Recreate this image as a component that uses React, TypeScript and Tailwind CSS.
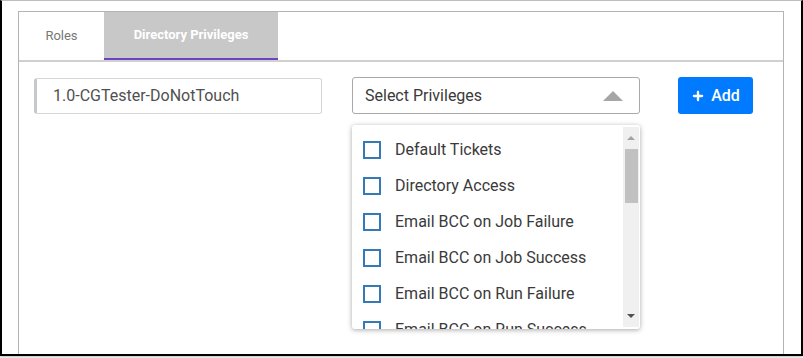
import { Plus } from 'lucide-react'

const privileges = [
  'Default Tickets',
  'Directory Access',
  'Email BCC on Job Failure',
  'Email BCC on Job Success',
  'Email BCC on Run Failure',
  'Email BCC on Run Success',
]

export default function App() {
  return (
    <div className="w-[803px] h-[358px] bg-white font-['Roboto',sans-serif]">
      <div className="w-[803px] h-[356px] border-t border-t-[#bdbdbd] border-x-2 border-b-2 border-black pl-4 pr-[17px] pt-[10px] overflow-hidden shadow-[0_1px_2px_#bbb]">
        <div className="h-[400px] border border-[#b4b4b4] border-b-0">
          {/* Tabs */}
          <div className="flex h-[50px] border-b-2 border-[#d0d0d0]">
            <div className="w-[85px] flex items-center justify-center text-[13px] text-[#777]">Roles</div>
            <div className="w-[174px] flex items-center justify-center bg-[#c8c8c8] text-[13px] font-bold text-white border-b-2 border-[#6f42c1]">
              Directory Privileges
            </div>
          </div>

          {/* Form row */}
          <div className="flex items-start pl-[15px] pt-[15px]">
            <div className="w-[288px] h-9 mt-px flex items-center pl-4 border border-[#d6d6d6] border-l-[3px] border-l-[#c4c9cf] rounded-[3px] text-[16px] text-[#505050]">
              1.0-CGTester-DoNotTouch
            </div>
            <div className="relative ml-[30px]">
              <div className="w-[288px] h-[37px] flex items-center justify-between pl-3 pr-4 border border-[#a8a8a8] rounded-[3px] text-[16px] text-[#3a3a3a]">
                <span className="mt-px">Select Privileges</span>
                <span className="w-0 h-0 border-x-[10px] border-x-transparent border-b-[10px] border-b-[#a6a6a6]" />
              </div>
              {/* Dropdown */}
              <div className="absolute left-0 top-[48px] w-[288px] h-[204px] bg-white rounded-[3px] shadow-[0_1px_5px_rgba(0,0,0,0.35)] flex overflow-hidden">
                <div className="flex-1 pt-[7px] pl-[11px]">
                  {privileges.map((p) => (
                    <div key={p} className="h-9 flex items-center gap-[14px]">
                      <span className="w-[18px] h-[18px] border-2 border-[#337ab7] shrink-0" />
                      <span className="text-[16px] text-[#3a3a3a] whitespace-nowrap">{p}</span>
                    </div>
                  ))}
                </div>
                <div className="w-[16px] mr-[1px] my-[2px] bg-[#f0f0f0] flex flex-col items-center">
                  <div className="h-[22px] flex items-center justify-center">
                    <span className="w-0 h-0 border-x-[4px] border-x-transparent border-b-[4px] border-b-[#a3a3a3]" />
                  </div>
                  <div className="w-[13px] h-[54px] bg-[#c1c1c1]" />
                  <div className="flex-1" />
                  <div className="h-[22px] flex items-center justify-center">
                    <span className="w-0 h-0 border-x-[4px] border-x-transparent border-t-[4px] border-t-[#505050]" />
                  </div>
                </div>
              </div>
            </div>
            <button className="ml-[38px] w-[75px] h-[37px] flex items-center justify-center gap-[6px] bg-[#007bff] rounded-[3px] text-white text-[16px] font-medium">
              <Plus className="w-[14px] h-[14px]" strokeWidth={4} />
              Add
            </button>
          </div>
        </div>
      </div>
    </div>
  )
}
